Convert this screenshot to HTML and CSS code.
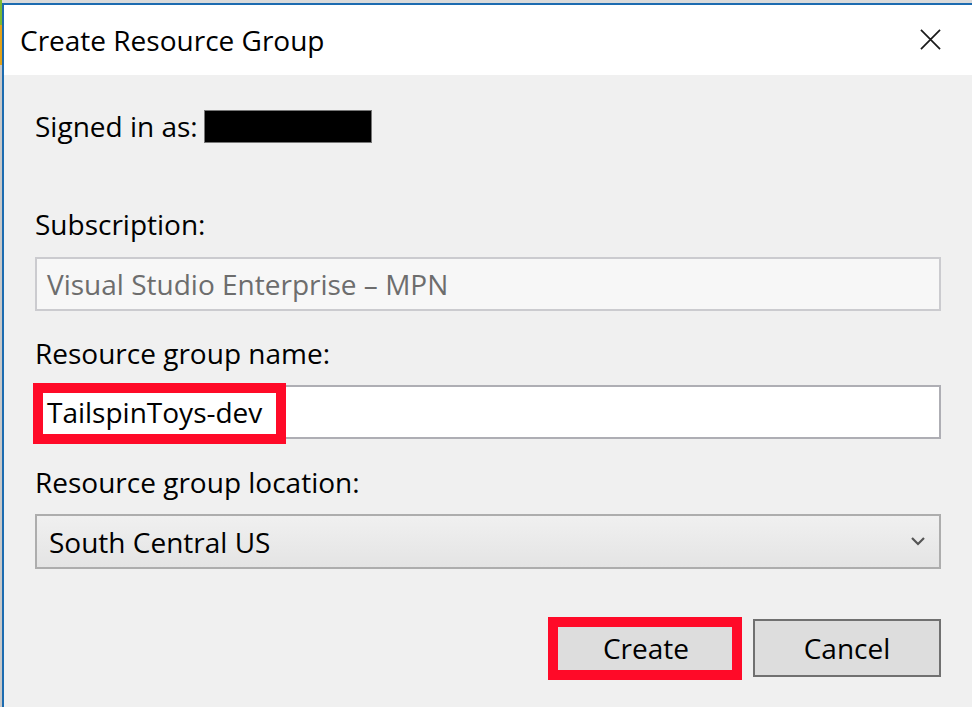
FILE: index.html
```html
<!DOCTYPE html>
<html>
<head>
<meta charset="utf-8">
<link rel="stylesheet" href="styles.css">
</head>
<body>
<div class="page">
  <div class="dialog">
    <div class="titlebar">
      <div class="title">Create Resource Group</div>
      <svg class="close" width="22" height="22" viewBox="0 0 22 22"><path d="M1 1 L21 21 M21 1 L1 21" stroke="#1a1a1a" stroke-width="1.8" fill="none"/></svg>
    </div>
    <div class="content">
      <div class="label signed">Signed in as:<span class="redact"></span></div>
      <div class="label sub-label">Subscription:</div>
      <div class="field disabled">Visual Studio Enterprise – MPN</div>
      <div class="label name-label">Resource group name:</div>
      <div class="field text">TailspinToys-dev<span class="mark mark-name"></span></div>
      <div class="label loc-label">Resource group location:</div>
      <div class="field select">South Central US
        <svg class="chev" width="14" height="9" viewBox="0 0 14 9"><path d="M1 1 L7 7 L13 1" stroke="#555" stroke-width="2.2" fill="none"/></svg>
      </div>
      <div class="buttons">
        <div class="btn create">Create<span class="mark mark-create"></span></div>
        <div class="btn">Cancel</div>
      </div>
    </div>
  </div>
</div>
</body>
</html>
```
FILE: styles.css
```css
html, body { margin: 0; padding: 0; }
body {
  width: 972px; height: 707px; overflow: hidden;
  font-family: "Open Sans", "Noto Sans", sans-serif;
  background: #dcdcdc;
}
.page {
  padding: 3px 0 0 2px;
  height: 707px; box-sizing: border-box;
  background:
    linear-gradient(to bottom, #7cb82f 0 25px, #e3a21a 25px 65px, #c8c8c8 65px) 0 0 / 2px 100% no-repeat,
    #dadada;
}
.dialog {
  border-top: 2px solid #1c6bb0;
  border-left: 2px solid #1c6bb0;
  height: 702px;
  background: #f0f0f0;
  display: flex; flex-direction: column;
}
.titlebar {
  height: 70px; background: #fff;
  display: flex; align-items: center; justify-content: space-between;
  padding: 0 31px 0 16px;
  flex: none;
}
.title { font-size: 28px; color: #000; margin-top: 0; }
.close { width: 21px; height: 21px; margin-top: -1px; }
.content {
  padding: 31px 31px 0 31px;
  display: flex; flex-direction: column;
}
.label {
  font-size: 28px; line-height: 40px; height: 40px; color: #000;
  white-space: nowrap;
}
.signed { display: flex; align-items: center; }
.redact {
  display: inline-block; width: 166px; height: 31px;
  background: #000; border: 1px solid #777; margin-left: 6px; margin-top: 1px;
}
.sub-label { margin-top: 58px; }
.name-label { margin-top: 22px; }
.loc-label { margin-top: 23px; }
.field {
  box-sizing: border-box; height: 54px; font-size: 28px;
  display: flex; align-items: center; padding-left: 10px;
  position: relative;
}
.disabled {
  margin-top: 13px; background: #f7f7f7; border: 2px solid #cbcbcf; color: #6d6d6d;
}
.text {
  margin-top: 12px; background: #fff; border: 2px solid #aeaeb4; color: #000;
}
.select {
  margin-top: 12px; height: 55px; padding-left: 12px;
  border: 2px solid #adadad; color: #000;
  background: linear-gradient(to bottom, #f0f0f0, #e4e4e4);
}
.chev { position: absolute; right: 14px; top: 21px; }
.mark {
  position: absolute; border: 10px solid #ff0a28; box-sizing: border-box;
  pointer-events: none;
}
.mark-name { left: -4px; top: -4px; width: 253px; height: 61px; }
.buttons {
  display: flex; justify-content: flex-end; gap: 13px;
  margin-top: 50px;
}
.btn {
  box-sizing: border-box; width: 188px; height: 58px;
  border: 2px solid #707070; background: #dddddd;
  font-size: 28px; display: flex; align-items: center; justify-content: center;
  position: relative; color: #000;
}
.mark-create { left: -6px; top: -4px; width: 194px; height: 63px; }
```
